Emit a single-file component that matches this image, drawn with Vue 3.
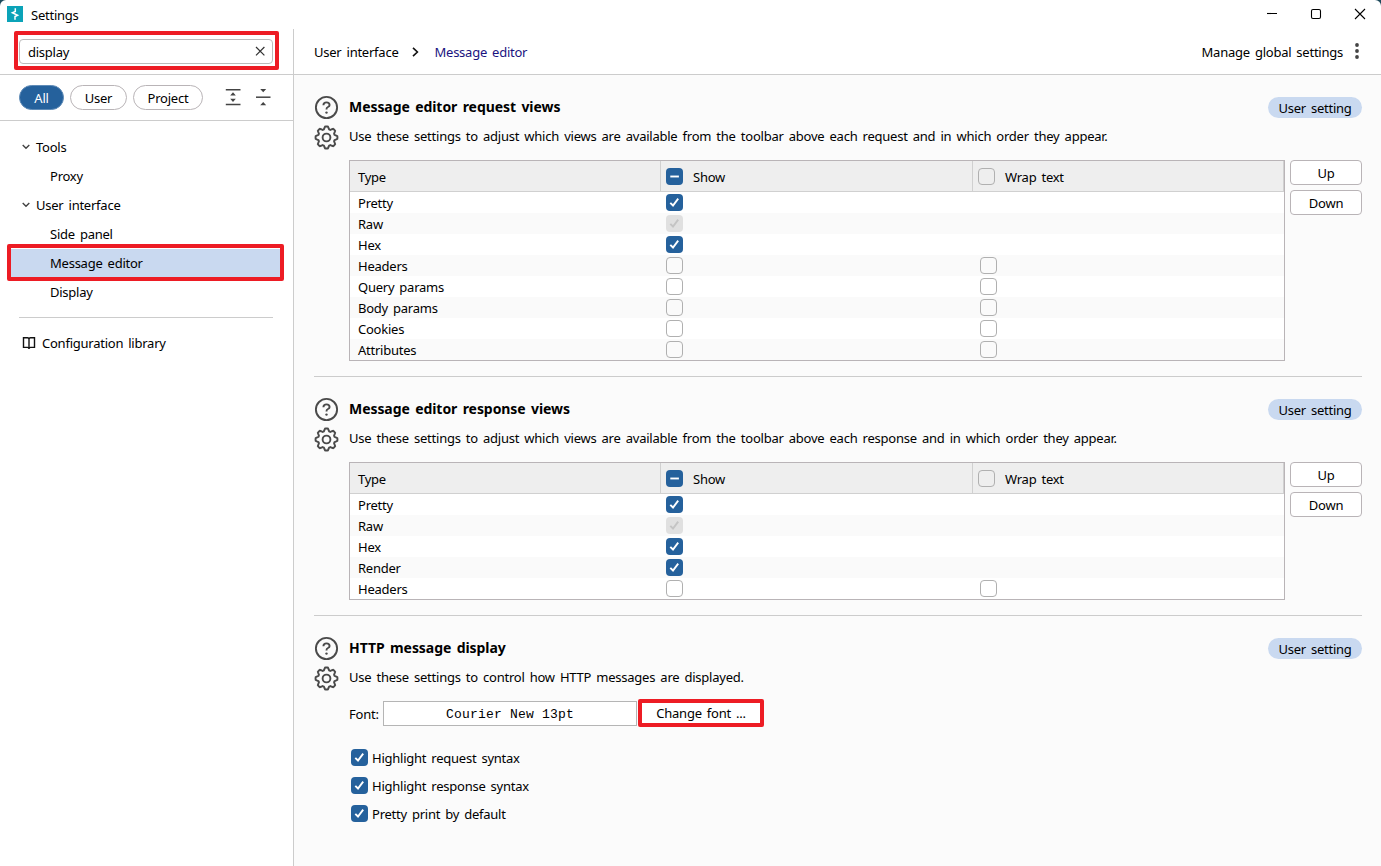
<script setup>
import { ref } from 'vue'

const query = ref('display')
const filters = ['All', 'User', 'Project']
const activeFilter = ref('All')

const tree = [
  { label: 'Tools', items: ['Proxy'] },
  { label: 'User interface', items: ['Side panel', 'Message editor', 'Display'] },
]
const selected = ref('Message editor')

const sections = [
  {
    id: 'request',
    title: 'Message editor request views',
    text: 'Use these settings to adjust which views are available from the toolbar above each request and in which order they appear.',
    rows: [
      { type: 'Pretty', show: 'checked' },
      { type: 'Raw', show: 'disabled' },
      { type: 'Hex', show: 'checked' },
      { type: 'Headers', show: 'empty', wrap: 'empty' },
      { type: 'Query params', show: 'empty', wrap: 'empty' },
      { type: 'Body params', show: 'empty', wrap: 'empty' },
      { type: 'Cookies', show: 'empty', wrap: 'empty' },
      { type: 'Attributes', show: 'empty', wrap: 'empty' },
    ],
  },
  {
    id: 'response',
    title: 'Message editor response views',
    text: 'Use these settings to adjust which views are available from the toolbar above each response and in which order they appear.',
    rows: [
      { type: 'Pretty', show: 'checked' },
      { type: 'Raw', show: 'disabled' },
      { type: 'Hex', show: 'checked' },
      { type: 'Render', show: 'checked' },
      { type: 'Headers', show: 'empty', wrap: 'empty' },
    ],
  },
  {
    id: 'display',
    title: 'HTTP message display',
    text: 'Use these settings to control how HTTP messages are displayed.',
  },
]

const options = ['Highlight request syntax', 'Highlight response syntax', 'Pretty print by default']

// outline of the cog: eight rounded teeth around the centre
const cogPoints = Array.from({ length: 96 }, (_, i) => {
  const angle = (i / 96) * Math.PI * 2
  const tooth = Math.max(-1, Math.min(1, 1.5 * Math.cos(angle * 8) + 0.2))
  const radius = 9.7 + 1.25 * tooth
  return `${(12.5 + radius * Math.cos(angle)).toFixed(2)},${(12.5 + radius * Math.sin(angle)).toFixed(2)}`
}).join(' ')
</script>

<template>
  <div class="window">
    <header class="titlebar">
      <svg class="logo" width="16" height="16" viewBox="0 0 16 16">
        <rect width="16" height="16" fill="#0ba3b8" />
        <path d="M8.3 2.3V5.4L5.4 6.7 10.6 9.2 8 10.5V13.7" fill="none" stroke="#fff" stroke-width="1.5" />
      </svg>
      <span class="titlebar__name">Settings</span>
      <div class="titlebar__controls">
        <svg width="12" height="12" viewBox="0 0 12 12"><path d="M1 5.5h10" /></svg>
        <svg width="12" height="12" viewBox="0 0 12 12"><rect x="1.5" y="1.5" width="9" height="9" rx="1.5" /></svg>
        <svg width="12" height="12" viewBox="0 0 12 12"><path d="M1 1l10 10M11 1L1 11" /></svg>
      </div>
    </header>

    <div class="body">
      <aside class="sidebar">
        <div class="search">
          <div class="search__box">
            <span>{{ query }}</span>
            <svg width="11" height="11" viewBox="0 0 11 11"><path d="M1 1l8.400 8.400M9.400 1L1 9.400" /></svg>
          </div>
        </div>

        <div class="filters">
          <button
            v-for="filter in filters"
            :key="filter"
            class="filters__pill"
            :class="[`filters__pill--${filter.toLowerCase()}`, { 'is-active': filter === activeFilter }]"
            @click="activeFilter = filter"
          >{{ filter }}</button>
          <svg class="filters__expand" width="16" height="17" viewBox="0 0 16 17">
            <path d="M.8.8h14.7M.8 15.5h14.7" stroke="#444" stroke-width="1.5" />
            <path d="M8 3.300l2.800 3.200H5.200zM8 13l2.800-3.200H5.200z" fill="#444" />
          </svg>
          <svg class="filters__collapse" width="16" height="17" viewBox="0 0 16 17">
            <path d="M0 8.2h14.5" stroke="#444" stroke-width="1.5" />
            <path d="M7.200 3.200l3-3.200h-6zM7.200 13l3 3.200h-6z" fill="#444" />
          </svg>
        </div>

        <nav class="tree">
          <template v-for="group in tree" :key="group.label">
            <div class="tree__group">
              <svg width="8" height="6" viewBox="0 0 8 6"><path d="M.7 1L4 4.3 7.3 1" /></svg>
              <span>{{ group.label }}</span>
            </div>
            <div
              v-for="item in group.items"
              :key="item"
              class="tree__item"
              :class="{ 'is-selected': item === selected }"
              @click="selected = item"
            >{{ item }}</div>
          </template>
        </nav>

        <div class="library">
          <svg width="14" height="13" viewBox="0 0 14 13">
            <path d="M1.500.8h4Q7 .8 7 2.200 7 .8 8.500.8h4v9.600h-4Q7 10.400 7 12 7 10.400 5.500 10.400h-4zM7 2.200V12" />
          </svg>
          <span>Configuration library</span>
        </div>
      </aside>

      <main class="content">
        <div class="crumbs">
          <span>User interface</span>
          <svg class="crumbs__arrow" width="7" height="10" viewBox="0 0 7 10"><path d="M1 .8L5.4 5 1 9.2" /></svg>
          <span class="crumbs__current">Message editor</span>
          <span class="crumbs__manage">Manage global settings</span>
          <svg class="crumbs__dots" width="4" height="16" viewBox="0 0 4 16">
            <circle cx="2" cy="2" r="1.9" /><circle cx="2" cy="8" r="1.9" /><circle cx="2" cy="14" r="1.9" />
          </svg>
        </div>

        <section v-for="section in sections" :key="section.id" class="section">
          <div class="section__head">
            <div class="section__icons">
              <svg width="25" height="25" viewBox="0 0 25 25">
                <circle cx="12.5" cy="12.5" r="10.6" />
                <path d="M9.400 10.200Q9.500 7.400 12.500 7.400T15.600 10Q15.600 11.300 14 12T12.500 14.200V14.600" />
                <circle cx="12.5" cy="17.6" r="1.2" class="dot" />
              </svg>
              <svg width="25" height="25" viewBox="0 0 25 25">
                <polygon :points="cogPoints" />
                <circle cx="12.5" cy="12.5" r="3.9" />
              </svg>
            </div>
            <div class="section__titles">
              <h2>{{ section.title }}</h2>
              <p>{{ section.text }}</p>
            </div>
            <span class="section__badge">User setting</span>
          </div>

          <div v-if="section.rows" class="section__body">
            <div class="table">
              <div class="table__row table__row--head">
                <span>Type</span>
                <span><i class="check check--mixed"><svg viewBox="0 0 17 17"><path d="M4.300 8.500h8.600" /></svg></i><b>Show</b></span>
                <span><i class="check check--empty"></i><b>Wrap text</b></span>
              </div>
              <div v-for="row in section.rows" :key="row.type" class="table__row">
                <span>{{ row.type }}</span>
                <span>
                  <i class="check" :class="`check--${row.show}`">
                    <svg v-if="row.show !== 'empty'" viewBox="0 0 17 17"><path d="M4.300 8.800L7 11.500 12.200 4.600" /></svg>
                  </i>
                </span>
                <span><i v-if="row.wrap" class="check" :class="`check--${row.wrap}`"></i></span>
              </div>
            </div>
            <div class="section__buttons">
              <button>Up</button>
              <button>Down</button>
            </div>
          </div>

          <div v-else class="display">
            <div class="display__font">
              <label>Font:</label>
              <div class="display__value">Courier New 13pt</div>
              <button class="display__change">Change font ...</button>
            </div>
            <div v-for="option in options" :key="option" class="display__option">
              <i class="check check--checked"><svg viewBox="0 0 17 17"><path d="M4.300 8.800L7 11.500 12.200 4.600" /></svg></i>
              <span>{{ option }}</span>
            </div>
          </div>
        </section>
      </main>
    </div>
  </div>
</template>

<style>
body {
  margin: 0;
  background: #1d4a5c;
}
</style>

<style scoped>
.window {
  display: flex;
  flex-direction: column;
  box-sizing: border-box;
  width: 1381px;
  height: 866px;
  overflow: hidden;
  background: #fff;
  border-radius: 6px 6px 0 0;
  color: #000;
  font-family: 'Noto Sans', 'Noto Sans CJK KR', sans-serif;
  font-size: 13px;
  line-height: 20px;
  letter-spacing: -0.24px;
  word-spacing: 1.9px;
  white-space: nowrap;
}

.window * {
  box-sizing: border-box;
}

svg {
  display: block;
  flex: none;
}

button {
  margin: 0;
  padding: 0;
  color: #000;
  font: inherit;
  letter-spacing: inherit;
  word-spacing: inherit;
  background: #fff;
  border: 1px solid #b9b4b7;
}

.titlebar {
  display: flex;
  align-items: center;
  flex: none;
  height: 29px;
  padding: 0 15px 1px 7px;
}

.titlebar__name {
  margin: 2px 0 0 8px;
}

.titlebar__controls {
  display: flex;
  gap: 32px;
  margin-left: auto;
}

.titlebar__controls svg {
  fill: none;
  stroke: #000;
  stroke-width: 1.1;
}

.body {
  display: flex;
  flex: 1;
  min-height: 0;
}

.sidebar {
  flex: none;
  width: 294px;
  border-right: 1px solid #ccc;
}

.search {
  height: 46px;
  padding: 10px 20px 0 19px;
  border-bottom: 1px solid #ccc;
}

.search__box {
  position: relative;
  display: flex;
  align-items: center;
  justify-content: space-between;
  height: 25px;
  padding: 0 6px 0 8px;
  border: 1px solid #bbb;
  border-radius: 4px;
}

.search__box svg {
  fill: none;
  stroke: #333;
  stroke-width: 1.2;
}

.search__box::after {
  content: '';
  position: absolute;
  inset: -9px -7px -7px -6px;
  border: 4px solid #ed1c24;
  border-radius: 2px;
}

.filters {
  display: flex;
  align-items: center;
  height: 46px;
  padding-left: 19px;
  border-bottom: 1px solid #ccc;
}

.filters__pill {
  height: 25px;
  padding-top: 1px;
  margin-right: 6px;
  border-radius: 13px;
}

.filters__pill--all {
  width: 45px;
}

.filters__pill--user {
  width: 57px;
}

.filters__pill--project {
  width: 70px;
}

.filters__pill.is-active {
  color: #fff;
  background: #25619c;
  border-color: #5f8bb7;
}

.filters__expand {
  margin-left: 16px;
}

.filters__collapse {
  margin-left: 15px;
}

.tree {
  margin: 12px 20px 0 19px;
  padding-bottom: 10px;
  border-bottom: 1px solid #ccc;
}

.tree__group,
.tree__item {
  height: 29px;
  line-height: 29px;
}

.tree__group {
  display: flex;
  align-items: center;
  gap: 6px;
  padding-left: 3px;
}

.tree__group svg {
  margin-bottom: 2px;
  fill: none;
  stroke: #444;
  stroke-width: 1.4;
}

.tree__item {
  padding-left: 31px;
}

.tree__item.is-selected {
  position: relative;
  margin: 0 -7px 0 -8px;
  padding-left: 39px;
  background: #c9d9f0;
}

.tree__item.is-selected::after {
  content: '';
  position: absolute;
  inset: -5px -4px -3px;
  border: 4px solid #ed1c24;
  border-radius: 2px;
}

.library {
  display: flex;
  align-items: center;
  gap: 6px;
  height: 50px;
  padding-left: 22px;
}

.library svg {
  fill: none;
  stroke: #111;
  stroke-width: 1.4;
}

.content {
  flex: 1;
  min-width: 0;
  background: #fbfbfb;
}

.crumbs {
  display: flex;
  align-items: center;
  height: 46px;
  padding: 0 22px 0 20px;
  background: #fff;
  border-bottom: 1px solid #ccc;
}

.crumbs__arrow {
  margin: 0 15px 0 14px;
  fill: none;
  stroke: #111;
  stroke-width: 1.6;
}

.crumbs__current {
  color: #1a1380;
}

.crumbs__manage {
  margin-left: auto;
}

.crumbs__dots {
  margin: 0 0 2px 12px;
  fill: #444;
}

.section {
  margin: 0 19px 0 20px;
  padding: 20px 0 15px;
  border-bottom: 1px solid #ccc;
}

.section:last-child {
  border-bottom: 0;
}

.section__head {
  display: flex;
  height: 54px;
}

.section__icons {
  display: flex;
  flex-direction: column;
  gap: 5px;
  width: 35px;
}

.section__icons svg {
  fill: none;
  stroke: #4a4a4a;
  stroke-width: 1.9;
}

.section__icons .dot {
  fill: #4a4a4a;
  stroke: none;
}

.section__titles {
  flex: 1;
}

.section__titles h2 {
  margin: 0;
  font-size: 14px;
  font-weight: 700;
  line-height: 24px;
  letter-spacing: -0.07px;
}

.section__titles p {
  margin: 5px 0 0;
  line-height: 24px;
  word-spacing: 2px;
}

.section__badge {
  width: 94px;
  height: 21px;
  margin-top: 2px;
  line-height: 22px;
  text-align: center;
  background: #c9d9f0;
  border-radius: 11px;
}

.section__body {
  display: flex;
  gap: 5px;
  margin: 11px 0 0 35px;
}

.table {
  flex: 1;
  border: 1px solid #b9b4b7;
}

.table__row {
  display: grid;
  grid-template-columns: 311px 312px 1fr;
  height: 21px;
  background: #fff;
}

.table__row:nth-child(odd) {
  background: #fafafa;
}

.table__row > span {
  display: flex;
  align-items: center;
  padding: 1px 0 0 8px;
}

.table__row > span:nth-child(2) {
  padding: 0 0 0 5px;
}

.table__row > span:nth-child(3) {
  padding: 0 0 0 7px;
}

.table__row.table__row--head {
  height: 31px;
  background: #eee;
  border-bottom: 1px solid #d0d0d0;
}

.table__row--head > span {
  border-right: 1px solid #d0d0d0;
  padding-top: 2px;
}

.table__row--head > span:nth-child(3) {
  padding-left: 5px;
}

.table__row--head .check {
  margin-right: 10px;
}

.table__row--head b {
  padding-top: 2px;
  font-weight: 400;
}

.check {
  display: block;
  flex: none;
  width: 17px;
  height: 17px;
  border-radius: 4px;
}

.check svg {
  width: 17px;
  height: 17px;
  fill: none;
  stroke: #fff;
  stroke-width: 1.9;
}

.check--empty {
  border: 1px solid #b0b0b0;
}

.check--checked,
.check--mixed {
  background: #25619c;
}

.check--disabled {
  background: #e0e0e0;
}

.check--disabled svg {
  stroke: #c4c4c4;
}

.section__buttons {
  display: flex;
  flex-direction: column;
  gap: 5px;
  width: 72px;
}

.section__buttons button {
  height: 25px;
  padding-top: 1px;
  border-radius: 4px;
}

.display {
  padding: 9px 0 0 35px;
}

.display__font {
  display: flex;
  align-items: center;
  height: 28px;
  margin-bottom: 17px;
}

.display__font label {
  width: 34px;
  padding-top: 1px;
}

.display__value {
  width: 254px;
  height: 25px;
  font-family: 'Liberation Mono', monospace;
  font-size: 13px;
  line-height: 25px;
  letter-spacing: 0.2px;
  word-spacing: 0;
  text-align: center;
  background: #fff;
  border: 1px solid #b5b5b5;
}

.display__change {
  width: 126px;
  height: 28px;
  margin-left: 1px;
  border: 4px solid #ed1c24;
  border-radius: 2px;
}

.display__option {
  display: flex;
  align-items: center;
  gap: 4px;
  height: 28px;
  padding: 0 0 1px 2px;
}
</style>
